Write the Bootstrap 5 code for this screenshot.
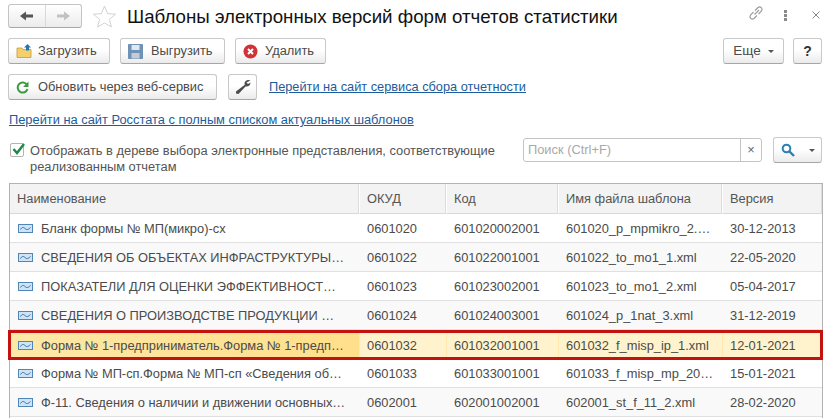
<!DOCTYPE html>
<html lang="ru">
<head>
<meta charset="utf-8">
<title>Шаблоны</title>
<link href="https://cdn.jsdelivr.net/npm/bootstrap@5.3.0/dist/css/bootstrap.min.css" rel="stylesheet">
<style>
html,body{height:100%;overflow:hidden}
body{background:#fff;font-family:"Liberation Sans",Arial,sans-serif;font-size:12.85px;color:#4b4b4b;line-height:16px}
.sheet{width:838px;height:418px;padding:4px 16px 0 8px;overflow:hidden}
.head-row{height:24px}
.nav-pair{width:74px;height:24px;border:1px solid #c4c4c4;border-bottom-color:#a8a8a8;border-radius:3px;background:linear-gradient(#fff,#ececec)}
.nav-pair>span{flex:1;height:100%}
.nav-pair>span+span{border-left:1px solid #d8d8d8}
.fav{margin-left:11px;margin-right:11px;width:23px;height:23px}
.page-title{font-size:18.72px;line-height:24px;color:#111;margin:0;font-weight:400;white-space:nowrap;position:relative;top:1px}
.win-ico{position:absolute;top:0}
.ubtn{height:26px;border:1px solid #c9c9c9;border-bottom-color:#a6a6a6;border-radius:3px;background:linear-gradient(#fff 45%,#ebebeb);padding:0;color:#4b4b4b;font-size:12.85px;line-height:24px;white-space:nowrap;display:flex;align-items:center;justify-content:center}
.ubtn:hover{color:#4b4b4b}
.ubtn.lft{justify-content:flex-start;padding-left:7px}
.ubtn svg{flex:none}
.caret-mini{display:inline-block;border:3px solid transparent;border-top:3.5px solid #555;border-bottom:0}
.row-a{margin-top:10px;gap:10px}
.row-b{margin-top:10px}
.ulink{color:#1d5c9a;text-decoration:underline;font-size:12.85px}
.row-b .ulink{font-size:12.75px}
.lnk2{margin:12px 0 0 1px;height:16px}
.chk-row{margin-top:9px;height:36px;position:relative}
.chk-box{width:14px;height:14px;border:1px solid #b4b4b4;border-radius:2px;background:#fff;margin:6px 6px 0 2px;position:relative;flex:none}
.chk-box svg{position:absolute;left:0;top:-3px}
.chk-text{width:480px;line-height:16px;margin-top:6px;color:#555}
.search-box{position:absolute;left:515px;top:1px;width:239px;height:24px;border:1px solid #c4c4c4;border-radius:3px;background:#fff}
.search-box>span:first-child{flex:1;padding-left:4px;color:#a9a9a9;line-height:22px}
.search-box>span:last-child{width:21px;border-left:1px solid #c4c4c4;text-align:center;line-height:22px;color:#666}
.search-btn{position:absolute;left:765px;top:0;width:49px}
.grid-wrap{position:absolute;left:9px;top:183px;width:814px;height:240px;border:1px solid #b3b3b3;border-bottom:0;overflow:hidden}
.sheet-pos{position:relative}
.tpl-table{width:812px;table-layout:fixed;border-collapse:separate;border-spacing:0;margin:0;font-size:12.85px;color:#4b4b4b}
.tpl-table th,.tpl-table td{padding:2px 0 0 7px;white-space:nowrap;overflow:hidden;vertical-align:middle;height:29px;border-bottom:1px solid #e0e0e0;font-weight:400}
.tpl-table td+td{padding-left:8px}
.tpl-table th{height:30px;padding-top:0;background:#f3f3f3;border-bottom:1px solid #d9d9d9;border-left:1px solid #fff;border-right:1px solid #dcdcdc;color:#555}
.tpl-table th:first-child{border-left:0}
.tpl-table tr.alt td{background:#f9f9f9}
.cell-name{display:flex;align-items:center;gap:8px}
.cell-name svg{flex:none;margin-left:1px;margin-top:-1px}
.tpl-table tr.sel td{background:#fff3cd;border-bottom:0}
.tpl-table tr.sel td:first-child{background:linear-gradient(90deg,#fde8a8,#ffdf8a)}
.tpl-table tr.sel td+td{border-left:1px solid #ffe9b0;padding-left:7px}
.sel-frame{position:absolute;left:8px;top:330px;width:815px;height:30px;border:3px solid #c4120f;pointer-events:none}
</style>
</head>
<body>
<div class="sheet sheet-pos">
  <div class="head-row d-flex align-items-center position-relative">
    <div class="nav-pair d-flex align-items-center">
      <span class="d-flex align-items-center justify-content-center"><svg width="16" height="12" viewBox="0 0 16 12"><path d="M1 6 7 1.500V4.500H14V7.500H7V10.500Z" fill="#555"/></svg></span>
      <span class="d-flex align-items-center justify-content-center"><svg width="16" height="12" viewBox="0 0 16 12"><path d="M15 6 9 1.500V4.500H2V7.500H9V10.500Z" fill="#c2c2c2"/></svg></span>
    </div>
    <svg class="fav" viewBox="0 0 23 23"><path d="M11.500 1 14.600 8.600 22.500 9.200 16.400 14.400 18.400 22 11.500 18 4.600 22 6.600 14.400.5 9.200 8.400 8.600Z" fill="#fff" stroke="#d2d2d2"/></svg>
    <h1 class="page-title">Шаблоны электронных версий форм отчетов статистики</h1>
    <svg class="win-ico" style="left:739px" width="18" height="18" viewBox="0 0 18 18" fill="none" stroke="#999" stroke-width="1.100"><path d="M7.500 10.500 12 6M6.500 8 3.500 11a2.500 2.500 0 0 0 3.500 3.500l3-3M8 6.500l3-3A2.500 2.500 0 0 1 14.500 7l-3 3"/></svg>
    <svg class="win-ico" style="left:775px;top:2px" width="6" height="18" viewBox="0 0 6 18" fill="#8a8a8a"><rect x="1" y="4" width="3" height="3"/><rect x="1" y="8" width="3" height="3"/><rect x="1" y="12" width="3" height="3"/></svg>
    <svg class="win-ico" style="left:803px;top:6px" width="10" height="10" viewBox="0 0 10 10" stroke="#888" stroke-width="1"><path d="M1.500 1.500 8.500 8.500M8.500 1.500 1.500 8.500"/></svg>
  </div>

  <div class="d-flex row-a">
    <a class="ubtn btn lft" style="width:102px" href="#"><svg style="margin-right:6px" width="16" height="16" viewBox="0 0 16 16"><path d="M1 5H6L7 6.500H15V14.500H1Z" fill="#f5cf6b" stroke="#c49a3a" stroke-width=".8"/><path d="M11.500 1 15 4.500H13V7.500H10V4.500H8Z" fill="#1f78b4"/></svg>Загрузить</a>
    <a class="ubtn btn lft" style="width:105px" href="#"><svg style="margin-right:8px" width="15" height="15" viewBox="0 0 15 15"><path d="M.5.500H14.500V14.500H.5Z" fill="#6d93b8" stroke="#5d84a8" stroke-width=".8"/><rect x="3.500" y="1" width="8" height="5" fill="#dfe8f0"/><rect x="3.500" y="9" width="8" height="5.500" fill="#c3ccd6"/></svg>Выгрузить</a>
    <a class="ubtn btn lft" style="width:91px" href="#"><svg style="margin-right:7px" width="15" height="15" viewBox="0 0 15 15"><circle cx="7.500" cy="7.500" r="7" fill="#cf3338"/><path d="M5 5 10 10M10 5 5 10" stroke="#fff" stroke-width="2"/></svg>Удалить</a>
    <div class="ms-auto d-flex" style="gap:9px">
      <a class="ubtn btn" style="width:61px" href="#"><span style="font-size:13.5px">Еще</span><span class="caret-mini" style="margin-left:7px"></span></a>
      <a class="ubtn btn" style="width:29px;font-weight:700;font-size:14px;color:#333" href="#">?</a>
    </div>
  </div>

  <div class="d-flex align-items-center row-b">
    <a class="ubtn btn lft" style="width:209px" href="#"><svg style="margin-right:9px" width="13" height="13" viewBox="0 0 13 13" fill="none"><path d="M11 4A5 5 0 1 0 11.500 8" stroke="#3c9a42" stroke-width="2"/><path d="M12.500 .5V6H7Z" fill="#3c9a42"/></svg>Обновить через веб-сервис</a>
    <a class="ubtn btn" style="width:29px;margin-left:11px" href="#"><svg width="16" height="16" viewBox="0 0 16 16"><path d="M15.500 1.500C13 0 9.500 1.500 9.500 4.500L9.800 5.800 1 12.500 1 14.500 3.500 15 10.500 7.500C13.500 8 15.500 6 15.500 3.500L13 5 11.500 3.500Z" fill="#4d4d4d"/></svg></a>
    <a class="ulink" style="margin-left:12px" href="#">Перейти на сайт сервиса сбора отчетности</a>
  </div>

  <div class="lnk2"><a class="ulink" href="#">Перейти на сайт Росстата с полным списком актуальных шаблонов</a></div>

  <div class="chk-row d-flex">
    <span class="chk-box"><svg width="16" height="16" viewBox="0 0 16 16" fill="none"><path d="M2.500 8 6 12 13 3" stroke="#1e8a4a" stroke-width="2.400"/></svg></span>
    <div class="chk-text">Отображать в дереве выбора электронные представления, соответствующие реализованным отчетам</div>
    <div class="search-box d-flex"><span>Поиск (Ctrl+F)</span><span>×</span></div>
    <a class="ubtn btn search-btn" href="#"><svg width="14" height="14" viewBox="0 0 14 14" fill="none"><circle cx="5.500" cy="5.500" r="3.800" stroke="#2a80b0" stroke-width="2"/><path d="M8.500 8.500 13 13" stroke="#2a80b0" stroke-width="2.400"/></svg><span class="caret-mini" style="margin-left:14px"></span></a>
  </div>

  <div class="grid-wrap">
    <table class="tpl-table">
      <colgroup><col style="width:349px"><col style="width:87px"><col style="width:112px"><col style="width:164px"><col style="width:100px"></colgroup>
      <thead><tr><th>Наименование</th><th>ОКУД</th><th>Код</th><th>Имя файла шаблона</th><th>Версия</th></tr></thead>
      <tbody>
        <tr><td><div class="cell-name"><svg width="15" height="9" viewBox="0 0 15 9"><rect x=".5" y=".5" width="14" height="8" fill="#cfe3f5" stroke="#4f86b8"/><path d="M2.500 5.500C4 3 5.500 3 7 4.500S10 6 12.500 3.500" fill="none" stroke="#2f6ea5"/></svg>Бланк формы № МП(микро)-сх</div></td><td>0601020</td><td>601020002001</td><td>601020_p_mpmikro_2.…</td><td>30-12-2013</td></tr>
        <tr class="alt"><td><div class="cell-name"><svg width="15" height="9" viewBox="0 0 15 9"><rect x=".5" y=".5" width="14" height="8" fill="#cfe3f5" stroke="#4f86b8"/><path d="M2.500 5.500C4 3 5.500 3 7 4.500S10 6 12.500 3.500" fill="none" stroke="#2f6ea5"/></svg>СВЕДЕНИЯ ОБ ОБЪЕКТАХ ИНФРАСТРУКТУРЫ…</div></td><td>0601022</td><td>601022001001</td><td>601022_to_mo1_1.xml</td><td>22-05-2020</td></tr>
        <tr><td><div class="cell-name"><svg width="15" height="9" viewBox="0 0 15 9"><rect x=".5" y=".5" width="14" height="8" fill="#cfe3f5" stroke="#4f86b8"/><path d="M2.500 5.500C4 3 5.500 3 7 4.500S10 6 12.500 3.500" fill="none" stroke="#2f6ea5"/></svg>ПОКАЗАТЕЛИ ДЛЯ ОЦЕНКИ ЭФФЕКТИВНОСТ…</div></td><td>0601023</td><td>601023002001</td><td>601023_to_mo1_2.xml</td><td>05-04-2017</td></tr>
        <tr class="alt"><td><div class="cell-name"><svg width="15" height="9" viewBox="0 0 15 9"><rect x=".5" y=".5" width="14" height="8" fill="#cfe3f5" stroke="#4f86b8"/><path d="M2.500 5.500C4 3 5.500 3 7 4.500S10 6 12.500 3.500" fill="none" stroke="#2f6ea5"/></svg>СВЕДЕНИЯ О ПРОИЗВОДСТВЕ ПРОДУКЦИИ …</div></td><td>0601024</td><td>601024003001</td><td>601024_p_1nat_3.xml</td><td>31-12-2019</td></tr>
        <tr class="sel"><td><div class="cell-name"><svg width="15" height="9" viewBox="0 0 15 9"><rect x=".5" y=".5" width="14" height="8" fill="#cfe3f5" stroke="#4f86b8"/><path d="M2.500 5.500C4 3 5.500 3 7 4.500S10 6 12.500 3.500" fill="none" stroke="#2f6ea5"/></svg>Форма № 1-предприниматель.Форма № 1-предп…</div></td><td>0601032</td><td>601032001001</td><td>601032_f_misp_ip_1.xml</td><td>12-01-2021</td></tr>
        <tr><td><div class="cell-name"><svg width="15" height="9" viewBox="0 0 15 9"><rect x=".5" y=".5" width="14" height="8" fill="#cfe3f5" stroke="#4f86b8"/><path d="M2.500 5.500C4 3 5.500 3 7 4.500S10 6 12.500 3.500" fill="none" stroke="#2f6ea5"/></svg>Форма № МП-сп.Форма № МП-сп «Сведения об…</div></td><td>0601033</td><td>601033001001</td><td>601033_f_misp_mp_20…</td><td>15-01-2021</td></tr>
        <tr class="alt"><td><div class="cell-name"><svg width="15" height="9" viewBox="0 0 15 9"><rect x=".5" y=".5" width="14" height="8" fill="#cfe3f5" stroke="#4f86b8"/><path d="M2.500 5.500C4 3 5.500 3 7 4.500S10 6 12.500 3.500" fill="none" stroke="#2f6ea5"/></svg>Ф-11. Сведения о наличии и движении основных…</div></td><td>0602001</td><td>602001002001</td><td>602001_st_f_11_2.xml</td><td>28-02-2020</td></tr>
      </tbody>
    </table>
  </div>
  <div class="sel-frame"></div>
</div>
<script src="https://cdn.jsdelivr.net/npm/bootstrap@5.3.0/dist/js/bootstrap.bundle.min.js"></script>
</body>
</html>
